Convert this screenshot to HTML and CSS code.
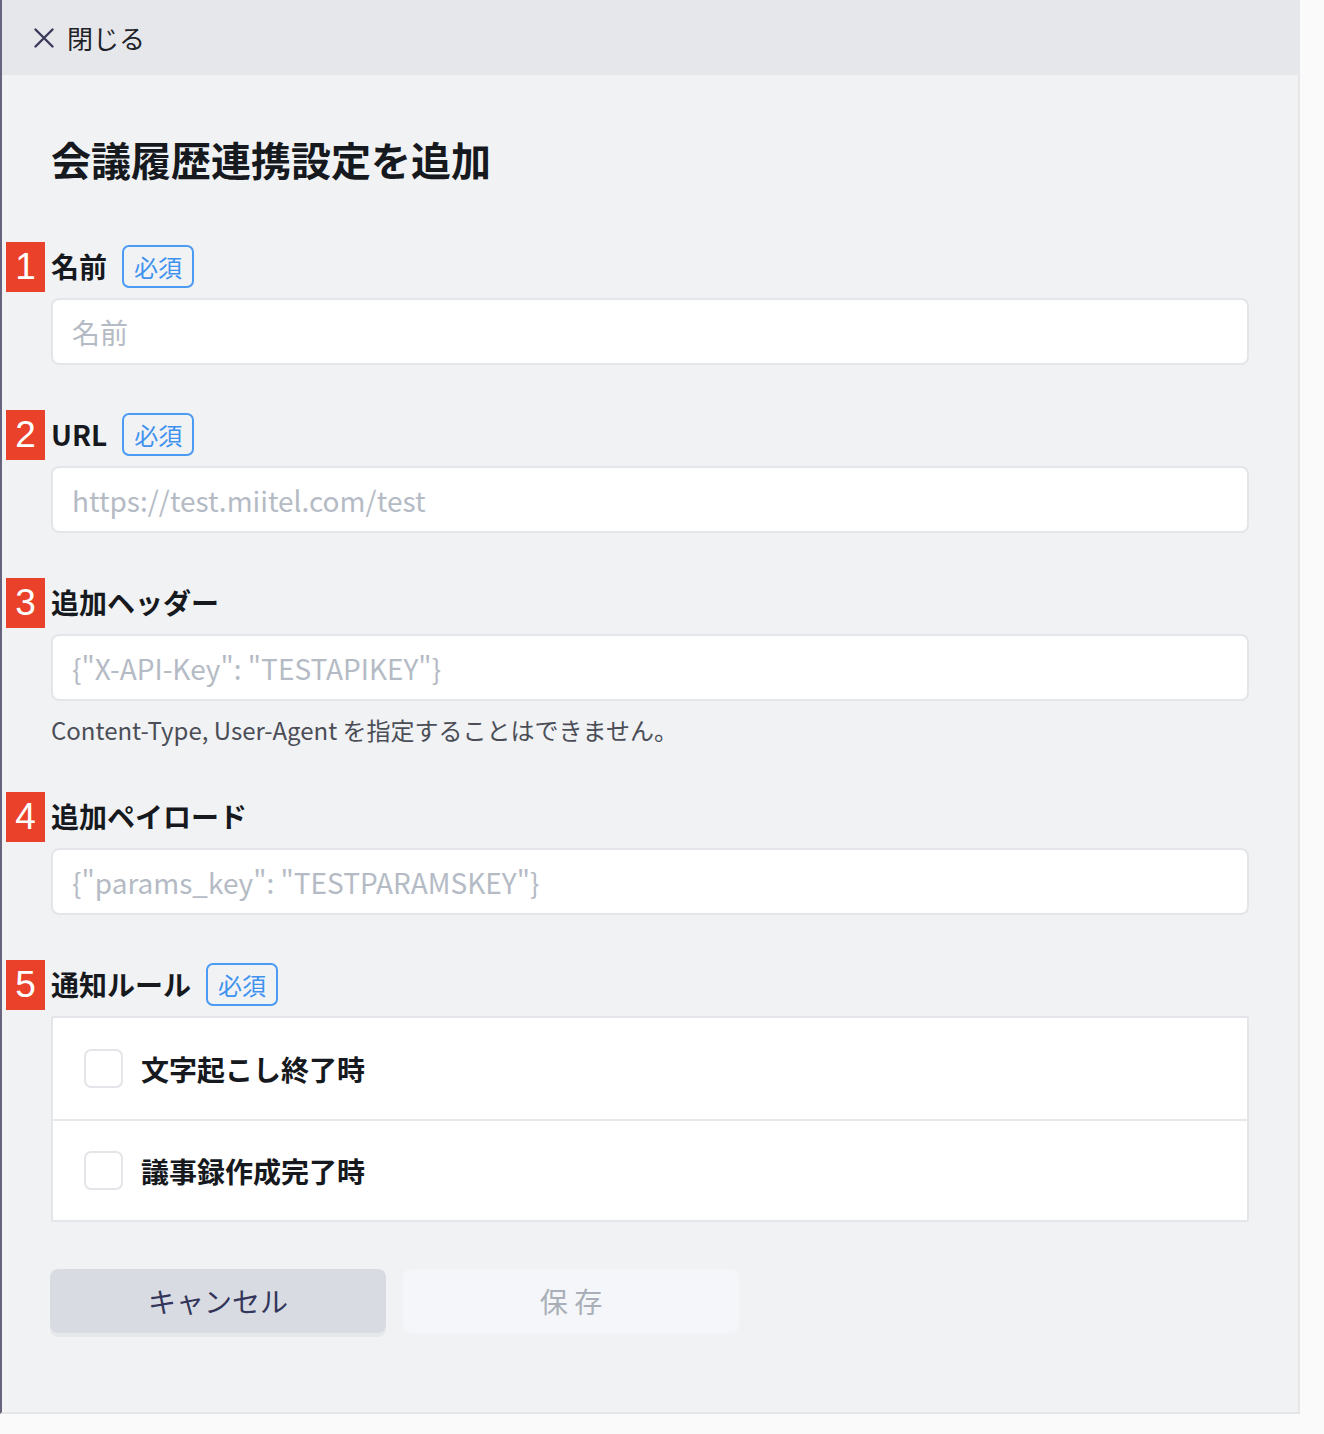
FILE: index.html
```html
<!DOCTYPE html>
<html lang="ja">
<head>
<meta charset="utf-8">
<title>会議履歴連携設定を追加</title>
<link rel="stylesheet" href="styles.css">
</head>
<body>
<div class="panel">
  <header class="panel-header">
    <button class="close-btn" type="button">
      <svg class="close-icon" width="20" height="20" viewBox="0 0 20 20" aria-hidden="true">
        <path d="M1.5 1.5 L18.5 18.5 M18.5 1.5 L1.5 18.5" stroke="#3b3a5a" stroke-width="2.4" stroke-linecap="round" fill="none"/>
      </svg>
      <span>閉じる</span>
    </button>
  </header>
  <main class="panel-body">
    <h1 class="title">会議履歴連携設定を追加</h1>

    <section class="field">
      <div class="label-row">
        <span class="num">1</span>
        <span class="label">名前</span>
        <span class="req">必須</span>
      </div>
      <input class="text-input" type="text" placeholder="名前">
    </section>

    <section class="field">
      <div class="label-row">
        <span class="num">2</span>
        <span class="label">URL</span>
        <span class="req">必須</span>
      </div>
      <input class="text-input" type="text" placeholder="https://test.miitel.com/test">
    </section>

    <section class="field">
      <div class="label-row">
        <span class="num">3</span>
        <span class="label">追加ヘッダー</span>
      </div>
      <input class="text-input" type="text" placeholder='{"X-API-Key": "TESTAPIKEY"}'>
      <p class="help">Content-Type, User-Agent を指定することはできません。</p>
    </section>

    <section class="field">
      <div class="label-row">
        <span class="num">4</span>
        <span class="label">追加ペイロード</span>
      </div>
      <input class="text-input" type="text" placeholder='{"params_key": "TESTPARAMSKEY"}'>
    </section>

    <section class="field">
      <div class="label-row">
        <span class="num">5</span>
        <span class="label">通知ルール</span>
        <span class="req">必須</span>
      </div>
      <div class="check-list">
        <label class="check-row"><span class="checkbox"></span><span class="check-text">文字起こし終了時</span></label>
        <label class="check-row"><span class="checkbox"></span><span class="check-text">議事録作成完了時</span></label>
      </div>
    </section>

    <div class="actions">
      <button class="btn btn-cancel" type="button">キャンセル</button>
      <button class="btn btn-save" type="button">保 存</button>
    </div>
  </main>
</div>
</body>
</html>
```

FILE: styles.css
```css
* { box-sizing: border-box; }

html, body {
  margin: 0;
  padding: 0;
}

body {
  background: #fafafa;
  font-family: "Noto Sans CJK JP", "Noto Sans", sans-serif;
  color: #1b1e22;
}

.panel {
  width: 1300px;
  height: 1414px;
  display: flex;
  flex-direction: column;
  border-left: 2px solid #686480;
  border-bottom: 2px solid #e6e6e6;
}

.panel-header {
  height: 75px;
  flex: 0 0 75px;
  background: #e6e7eb;
  display: flex;
  align-items: center;
  padding-left: 32px;
}

.close-btn {
  display: flex;
  align-items: center;
  gap: 13px;
  background: none;
  border: 0;
  padding: 0;
  font-family: inherit;
  font-size: 26px;
  color: #1f2328;
  line-height: 1;
}

.close-icon { display: block; }

.panel-body {
  flex: 1;
  background: #f1f2f4;
  border-right: 2px solid #e6e6e6;
  padding: 54px 49px 0 49px;
}

.title {
  margin: 0 0 55px 0;
  font-size: 40px;
  line-height: 60px;
  font-weight: 700;
  color: #16191d;
}

.field { margin-bottom: 47px; }

.label-row {
  position: relative;
  display: flex;
  align-items: center;
  height: 44px;
  margin-bottom: 10px;
}

.num {
  position: absolute;
  left: -45px;
  top: -2px;
  width: 39px;
  height: 50px;
  background: #e9412a;
  color: #fff;
  font-family: "Liberation Sans", Arial, sans-serif;
  font-size: 37px;
  line-height: 50px;
  text-align: center;
}

.label {
  font-size: 28px;
  font-weight: 700;
  color: #16191d;
  line-height: 1;
}

.req {
  margin-left: 15px;
  height: 43px;
  padding: 0 10px;
  border: 2px solid #4b9bf3;
  border-radius: 7px;
  color: #3f93ef;
  font-size: 24px;
  line-height: 39px;
}

.text-input {
  display: block;
  width: 100%;
  height: 67px;
  border: 2px solid #e3e5e9;
  border-radius: 8px;
  background: #fff;
  padding: 0 19px;
  font-family: "Noto Sans CJK JP", "Noto Sans", sans-serif;
  font-size: 28px;
  color: #1b1e22;
  outline: none;
}

.text-input::placeholder { color: #b5bbc5; }

.help {
  margin: 12px 0 0 0;
  font-size: 24px;
  line-height: 34px;
  color: #4b4e57;
}

.check-list {
  background: #fff;
  border: 2px solid #e3e5e9;
  border-radius: 2px;
}

.check-row {
  display: flex;
  align-items: center;
  height: 101px;
  padding-left: 31px;
  gap: 18px;
}

.check-row + .check-row { border-top: 2px solid #e6e8ec; }

.checkbox {
  width: 39px;
  height: 39px;
  border: 2px solid #e3e5e9;
  border-radius: 7px;
  background: #fff;
}

.check-text {
  font-size: 28px;
  font-weight: 700;
  color: #16191d;
}

.actions {
  display: flex;
  gap: 17px;
  margin-top: 2px;
  margin-left: -1px;
}

.btn {
  width: 336px;
  height: 64px;
  border: 0;
  border-radius: 8px;
  font-family: "Noto Sans CJK JP", "Noto Sans", sans-serif;
  font-size: 28px;
}

.btn-cancel {
  background: #d8dce2;
  color: #34355a;
  box-shadow: 0 4px 0 #e7e8eb;
}

.btn-save {
  background: #f5f6f9;
  color: #a9afb8;
}
```
